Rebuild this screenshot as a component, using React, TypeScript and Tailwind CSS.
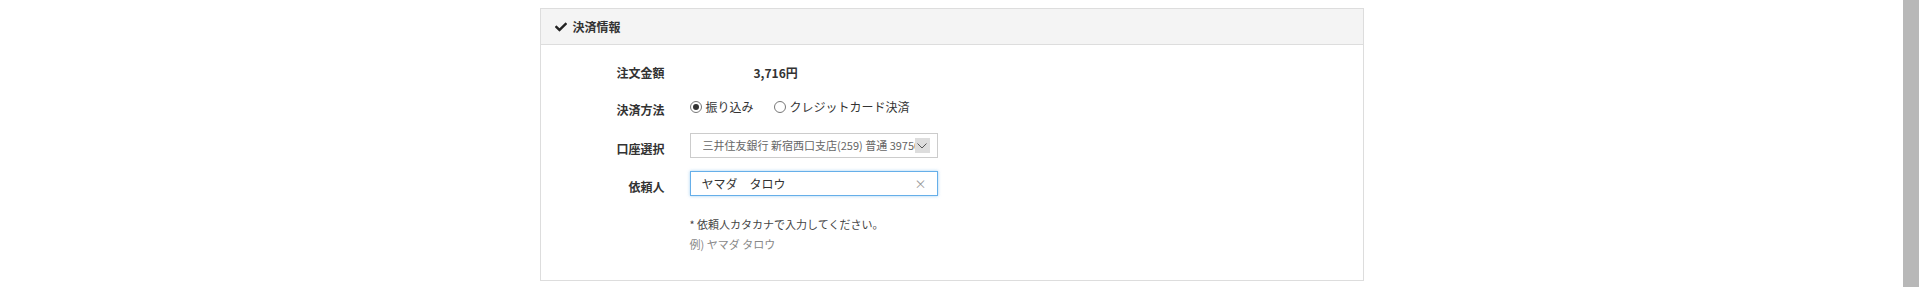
import { FaCheck } from "react-icons/fa";

const font = { fontFamily: '"Noto Sans CJK JP", "Noto Sans", sans-serif' };

function Label({ children, shift }: { children: React.ReactNode; shift?: boolean }) {
  return (
    <div className="w-[124px] shrink-0 text-right text-[12px] font-bold text-[#333]">
      <span className={shift ? "relative top-[3px]" : ""}>{children}</span>
    </div>
  );
}

function Radio({ checked, label }: { checked?: boolean; label: string }) {
  return (
    <label className="flex items-center gap-[4px] text-[12px] text-[#333]">
      <span className="flex h-[12px] w-[12px] items-center justify-center rounded-full border border-[#777] bg-white">
        {checked && <span className="h-[6px] w-[6px] rounded-full bg-[#333]" />}
      </span>
      {label}
    </label>
  );
}

export default function App() {
  return (
    <div className="flex h-[287px] w-full bg-white" style={font}>
      <div className="flex-1 pt-[8px]">
        <div className="mx-auto w-[824px] border border-[#dddddd] bg-white">
          <div className="flex h-[36px] items-center gap-[6px] border-b border-[#dddddd] bg-[#f4f4f4] pl-[14px]">
            <FaCheck className="h-[12px] w-[12px] text-[#222]" />
            <span className="text-[12px] font-bold text-[#333]">決済情報</span>
          </div>

          <div className="pb-[27px] pt-[15px]">
            <div className="flex h-[26px] items-center">
              <Label>注文金額</Label>
              <div className="ml-[89px] text-[12px] font-bold text-[#333]">3,716円</div>
            </div>

            <div className="mt-[8px] flex h-[26px] items-center">
              <Label shift>決済方法</Label>
              <div className="ml-[25px] flex items-center gap-[20px]">
                <Radio checked label="振り込み" />
                <Radio label="クレジットカード決済" />
              </div>
            </div>

            <div className="mt-[13px] flex h-[25px] items-center">
              <Label shift>口座選択</Label>
              <div className="ml-[25px] flex h-[25px] w-[248px] items-center border border-[#cccccc] bg-white pl-[12px] pr-[7px]">
                <div className="flex-1 overflow-hidden whitespace-nowrap text-[11px] text-[#666]">
                  三井住友銀行 新宿西口支店(259) 普通 39750
                </div>
                <div className="flex h-[15px] w-[15px] shrink-0 items-center justify-center bg-[#dddddd]">
                  <svg width="10" height="6" viewBox="0 0 10 6" fill="none">
                    <path d="M0.5 0.5 L5 5 L9.5 0.5" stroke="#555" strokeWidth="1" />
                  </svg>
                </div>
              </div>
            </div>

            <div className="mt-[13px] flex h-[25px] items-center">
              <Label shift>依頼人</Label>
              <div className="ml-[25px] flex h-[25px] w-[248px] items-center border border-[#66afe9] bg-white pl-[11px] pr-[10px] shadow-[0_0_3px_rgba(102,175,233,0.6)]">
                <div className="flex-1 text-[12px] text-[#333]">ヤマダ　タロウ</div>
                <span className="text-[12px] leading-none text-[#999]">×</span>
              </div>
            </div>

            <div className="ml-[149px] mt-[19px] text-[11px] leading-[18px] text-[#444]">
              * 依頼人カタカナで入力してください。
            </div>
            <div className="ml-[149px] mt-[2px] text-[11px] leading-[18px] text-[#888]">
              例) ヤマダ タロウ
            </div>
          </div>
        </div>
      </div>
      <div className="h-[287px] w-[16px] shrink-0 bg-[#b8b8b8]" />
    </div>
  );
}
